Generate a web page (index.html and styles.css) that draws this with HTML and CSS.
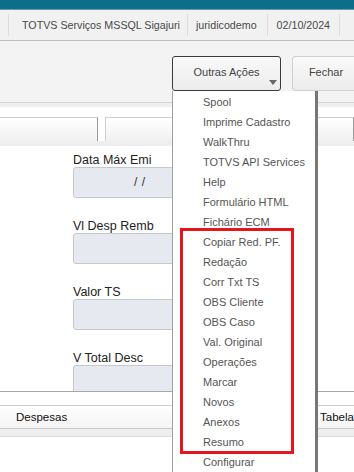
FILE: index.html
```html
<!DOCTYPE html>
<html lang="pt-BR">
<head>
    <meta charset="UTF-8">
    <meta name="viewport" content="width=device-width, initial-scale=1.0">
    <title>Sigajuri</title>
    <link rel="stylesheet" href="styles.css">
</head>
<body>
    <div class="topbar"></div>

    <div class="statusbar">
        <div class="status-item status-lead"></div>
        <div class="status-item status-env">TOTVS Serviços MSSQL Sigajuri</div>
        <div class="status-item status-user">juridicodemo</div>
        <div class="status-item status-date">02/10/2024</div>
    </div>

    <div class="toolbar">
        <button class="btn btn-active">
            Outras Ações
            <span class="btn-arrow"></span>
        </button>
        <button class="btn btn-close">Fechar</button>
    </div>

    <div class="folders">
        <div class="folder folder-first"></div>
        <div class="folder"></div>
    </div>

    <div class="content">
        <div class="fields">
            <div class="field">
                <label>Data Máx Emi</label>
                <div class="input input-date">/ /</div>
            </div>
            <div class="field">
                <label>Vl Desp Remb</label>
                <div class="input"></div>
            </div>
            <div class="field">
                <label>Valor TS</label>
                <div class="input"></div>
            </div>
            <div class="field">
                <label>V Total Desc</label>
                <div class="input"></div>
            </div>
        </div>
    </div>

    <div class="spacer"></div>

    <div class="bottom-tabs">
        <div class="bottom-tab">Despesas</div>
        <div class="bottom-tab bottom-tab-right">Tabela</div>
    </div>
    <div class="bottom-band"></div>

    <!-- dropdown of Outras Ações -->
    <div class="menu">
        <div class="menu-item">Spool</div>
        <div class="menu-item">Imprime Cadastro</div>
        <div class="menu-item">WalkThru</div>
        <div class="menu-item">TOTVS API Services</div>
        <div class="menu-item">Help</div>
        <div class="menu-item">Formulário HTML</div>
        <div class="menu-item">Fichário ECM</div>
        <div class="menu-item">Copiar Red. PF.</div>
        <div class="menu-item">Redação</div>
        <div class="menu-item">Corr Txt TS</div>
        <div class="menu-item">OBS Cliente</div>
        <div class="menu-item">OBS Caso</div>
        <div class="menu-item">Val. Original</div>
        <div class="menu-item">Operações</div>
        <div class="menu-item">Marcar</div>
        <div class="menu-item">Novos</div>
        <div class="menu-item">Anexos</div>
        <div class="menu-item">Resumo</div>
        <div class="menu-item">Configurar</div>
    </div>

    <!-- red highlight drawn over the menu -->
    <div class="highlight"></div>
</body>
</html>
```

FILE: styles.css
```css
body {
    font-family: Arial, "Liberation Sans", sans-serif;
    margin: 0;
    width: 354px;
    height: 472px;
    overflow: hidden;
    position: relative;
    background: #fff;
    color: #222;
}
.topbar {
    height: 9px;
    background: #0d6e8b;
    border-bottom: 1px solid #5d9db0;
}
.statusbar {
    height: 30px;
    display: flex;
    align-items: center;
    background: #f1f1f1;
    border-bottom: 1px solid #bdbdbd;
    font-size: 10.7px;
    color: #4a4a4a;
}
.status-item {
    flex: none;
    height: 22px;
    line-height: 22px;
    border-right: 1px solid #dcdcdc;
    white-space: nowrap;
}
.status-lead {
    width: 8px;
}
.status-env {
    padding: 0 7px 0 13px;
}
.status-user {
    padding: 0 10px 0 8px;
}
.status-date {
    padding: 0 9px 0 9px;
}
.toolbar {
    height: 62px;
    display: flex;
    align-items: flex-start;
    gap: 11px;
    padding-left: 172px;
    padding-top: 15px;
    box-sizing: border-box;
    background: #f3f3f3;
    border-bottom: 1px solid #d6d6d6;
    white-space: nowrap;
}
.btn {
    position: relative;
    flex: none;
    height: 35px;
    width: 109px;
    font-family: Arial, "Liberation Sans", sans-serif;
    font-size: 11px;
    color: #444;
    background: linear-gradient(#f9f9f9, #ececec);
    border: 1px solid #cfcfcf;
    border-radius: 3px;
    padding: 0 0 4px;
}
.btn-active {
    border-color: #3a3a3a;
}
.btn-close {
    width: 68px;
}
.btn-arrow {
    position: absolute;
    right: 3px;
    bottom: 5px;
    width: 0;
    height: 0;
    border-left: 4px solid transparent;
    border-right: 4px solid transparent;
    border-top: 5px solid #666;
}
.folders {
    height: 43px;
    background: linear-gradient(#efefef 0, #efefef 4px, #fff 4px);
    border-bottom: 5px solid #eeeeee;
    display: flex;
    align-items: flex-end;
    gap: 7px;
    box-sizing: border-box;
}
.folder {
    height: 23px;
    flex: 1;
    background: linear-gradient(#fff, #f1f1f1);
    border: 1px solid #cfcfcf;
    border-right-color: #9a9a9a;
    border-bottom: none;
}
.folder-first {
    flex: none;
    width: 97px;
    border-left: none;
}
.content {
    height: 245px;
    overflow: hidden;
    border-bottom: 1px solid #a8a8a8;
}
.fields {
    padding: 7px 0 0 73px;
    width: 180px;
}
.field {
    margin-bottom: 21px;
}
.field label {
    display: block;
    font-size: 12.5px;
    line-height: 14px;
    height: 14px;
    color: #222;
}
.input {
    height: 29px;
    background: #e6e9ef;
    border: 1px solid #c6c8cb;
    border-radius: 3px;
    font-size: 12px;
    line-height: 29px;
    color: #333;
}
.input-date {
    padding-left: 60px;
    word-spacing: 1px;
}
.spacer {
    height: 13px;
}
.bottom-tabs {
    height: 22px;
    display: flex;
    background: linear-gradient(#fff, #f3f3f3);
    border-top: 1px solid #cfcfcf;
    border-bottom: 1px solid #c8c8c8;
    font-size: 11.5px;
    line-height: 22px;
    color: #111;
}
.bottom-tab {
    padding-left: 16px;
    width: 304px;
    flex: none;
}
.bottom-tab-right {
    padding-left: 0;
}
.bottom-band {
    height: 7px;
    background: #eeeeee;
    border-bottom: 1px solid #dcdcdc;
}
.menu {
    position: absolute;
    left: 172px;
    top: 91px;
    width: 142px;
    padding-top: 1px;
    background: #fff;
    border-left: 1px solid #a0a0a0;
    border-right: 3px solid #777;
    font-size: 11px;
    color: #555;
}
.menu-item {
    height: 20px;
    line-height: 20px;
    padding-left: 30px;
    white-space: nowrap;
}
.highlight {
    position: absolute;
    left: 180px;
    top: 228px;
    width: 108px;
    height: 220px;
    border: 3px solid #e4151c;
}
```
